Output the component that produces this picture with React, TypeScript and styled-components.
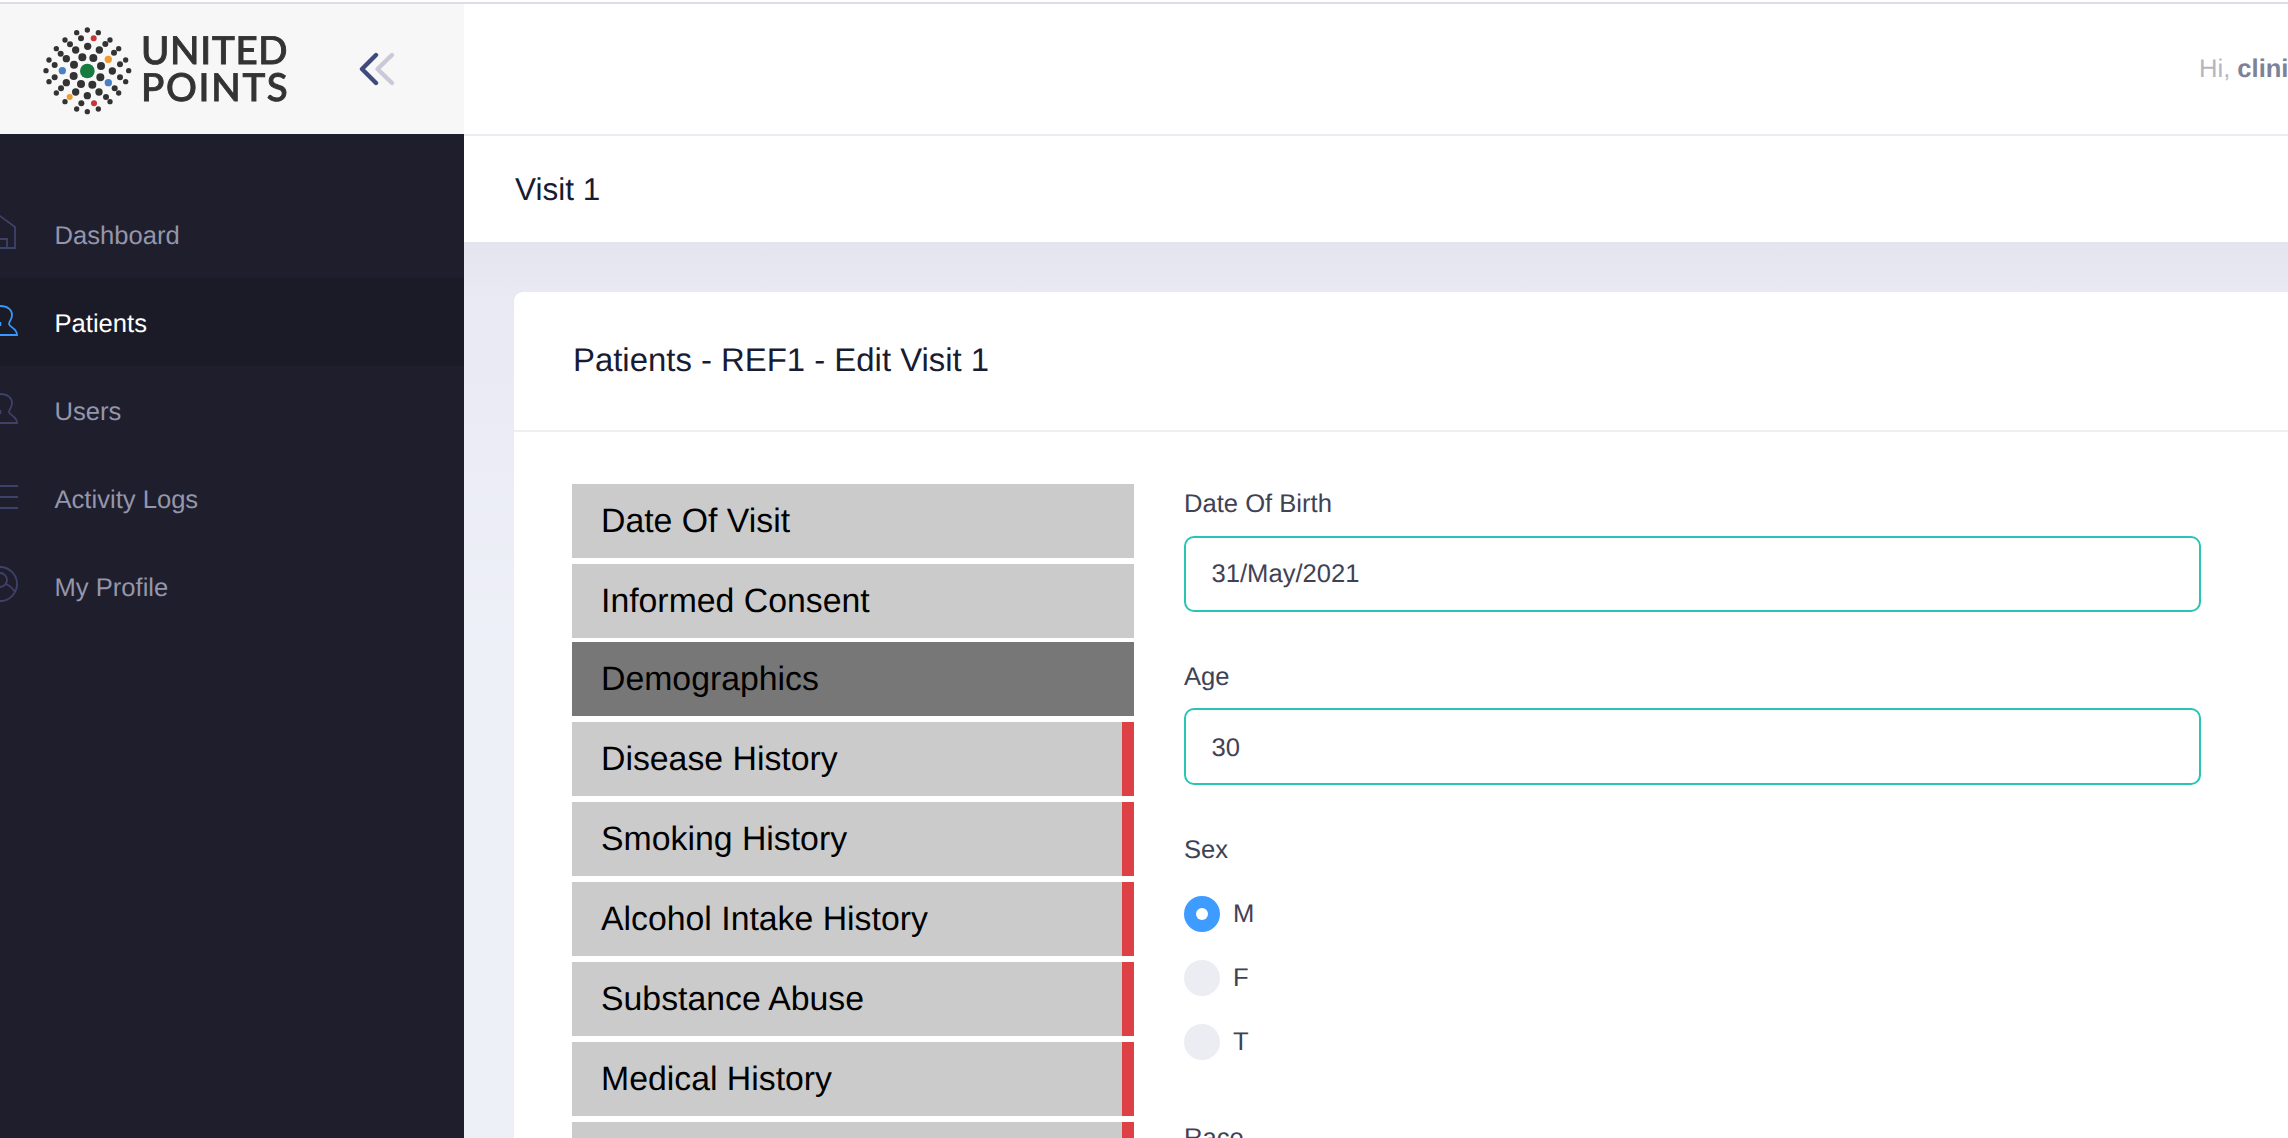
import React from "react";
import styled, { createGlobalStyle } from "styled-components";

const Global = createGlobalStyle`
  html, body { margin: 0; padding: 0; background: #fff; }
  * { box-sizing: border-box; }
`;

const Page = styled.div`
  width: 2288px;
  height: 1138px;
  overflow: hidden;
  background: #fff;
  font-family: "Liberation Sans", Arial, sans-serif;
  text-rendering: geometricPrecision;
  display: flex;
  flex-direction: column;
`;
const TopEdge = styled.div`
  height: 4px;
  flex: none;
  background: #fff;
  border-bottom: 2px solid #dedde6;
`;
const Shell = styled.div`
  flex: 1;
  min-height: 0;
  display: flex;
`;
const Aside = styled.aside`
  width: 464px;
  flex: none;
  display: flex;
  flex-direction: column;
`;
const Brand = styled.div`
  height: 130px;
  flex: none;
  background: #f7f7f7;
  display: flex;
  align-items: center;
  padding-left: 42px;
`;
const LogoSvg = styled.svg`
  flex: none;
  margin-left: -12px;
  filter: blur(0.5px);
`;
const Wordmark = styled.div`
  font-family: Lato, sans-serif;
  font-size: 38.5px;
  line-height: 37px;
  font-weight: 500;
  color: #333;
  margin-left: 1px;
  width: 163px;
  -webkit-text-stroke: 0.9px #333;
  filter: blur(0.4px);
`;
const WordLine = styled.div<{ $spacing: number }>`
  letter-spacing: ${(p) => p.$spacing}px;
`;
const Collapse = styled.svg`
  width: 40px;
  height: 40px;
  flex: none;
  margin-left: 55px;
`;
const Nav = styled.nav`
  flex: 1;
  background: #1e1e2d;
  padding-top: 56px;
  overflow: hidden;
`;
const NavItem = styled.div<{ $active?: boolean }>`
  height: 88px;
  display: flex;
  align-items: center;
  gap: 36.5px;
  padding-top: 4px;
  font-size: 25.6px;
  color: ${(p) => (p.$active ? "#ffffff" : "#9496ab")};
  background: ${(p) => (p.$active ? "#1b1b28" : "transparent")};
`;
const NavIcon = styled.svg<{ $active?: boolean }>`
  width: 36px;
  height: 40px;
  flex: none;
  margin-left: -18px;
  margin-top: -4px;
  fill: none;
  stroke: ${(p) => (p.$active ? "#3699ff" : "#3f4268")};
  stroke-width: 1.8;
`;
const Main = styled.main`
  flex: 1;
  min-width: 0;
  display: flex;
  flex-direction: column;
`;
const TopBar = styled.header`
  height: 132px;
  flex: none;
  background: #fff;
  border-bottom: 2px solid #ebedf3;
  display: flex;
  align-items: center;
  padding: 0 0 0 1735px;
  font-size: 25.6px;
  white-space: nowrap;
  overflow: hidden;
  color: #b5b5c3;
`;
const UserName = styled.b`
  color: #7e8299;
  margin-left: 7px;
`;
const SubHeader = styled.div`
  height: 106px;
  flex: none;
  background: #fff;
  display: flex;
  align-items: center;
  padding-left: 51px;
  font-size: 31.5px;
  color: #181c32;
`;
const Content = styled.div`
  flex: 1;
  min-height: 0;
  padding: 50px 0 0 50px;
  background: linear-gradient(#e4e4ef 0, #e8e9f3 50px, #eef0f8 400px);
`;
const Card = styled.section`
  width: 1850px;
  height: 900px;
  background: #fff;
  border-radius: 9px;
`;
const CardHead = styled.div`
  height: 140px;
  border-bottom: 2px solid #eeeef3;
  display: flex;
  align-items: center;
  padding: 0 0 2px 59px;
  font-size: 32.9px;
  color: #181c32;
`;
const CardBody = styled.div`
  display: flex;
  gap: 50px;
  padding: 52px 0 0 58px;
`;
const TabList = styled.div`
  width: 562px;
  flex: none;
  display: flex;
  flex-direction: column;
`;
const Tab = styled.div<{ $active?: boolean; $first?: boolean; $incomplete?: boolean }>`
  height: 74px;
  flex: none;
  margin-top: ${(p) => (p.$first ? "0" : p.$active ? "4px" : "6px")};
  padding-left: 29px;
  display: flex;
  align-items: center;
  font-size: 33.8px;
  color: #000;
  background: ${(p) => (p.$active ? "#777777" : "#cbcbcb")};
  border-right: ${(p) => (p.$incomplete ? "12px solid #dd4045" : "none")};
`;
const Form = styled.div`
  width: 1017px;
  flex: none;
  padding-top: 5px;
`;
const Label = styled.div<{ $gap?: number; $top?: number }>`
  font-size: 25.6px;
  line-height: 30px;
  color: #3f4254;
  margin-top: ${(p) => p.$top ?? 0}px;
  margin-bottom: ${(p) => p.$gap ?? 17}px;
`;
const Input = styled.div<{ $tall?: boolean }>`
  height: ${(p) => (p.$tall ? 77 : 76)}px;
  border: 2.5px solid #2ac4b5;
  border-radius: 10px;
  background: #fff;
  display: flex;
  align-items: center;
  padding: ${(p) => (p.$tall ? 3 : 0)}px 0 0 25.5px;
  font-size: 25.6px;
  color: #3f4254;
`;
const RadioRow = styled.div`
  display: flex;
  align-items: center;
  gap: 13px;
  height: 36px;
  margin-bottom: 28px;
  font-size: 25.6px;
  color: #3f4254;
`;
const RadioDot = styled.span<{ $on?: boolean }>`
  width: 36px;
  height: 36px;
  flex: none;
  border-radius: 50%;
  background: ${(p) => (p.$on ? "#3e9bff" : "#ebedf3")};
  display: flex;
  align-items: center;
  justify-content: center;
  &::after {
    content: "";
    display: ${(p) => (p.$on ? "block" : "none")};
    width: 12px;
    height: 12px;
    border-radius: 50%;
    background: #fff;
  }
`;

const D = "#333333";
const dots: [number, number, number, string][] = [
  [172, 162, 22, "#177a3e"],
  ...[[157,121],[190,123],[213,147],[211,181],[187,203],[153,201],[131,177],[132,143]].map(
    ([x, y]) => [x, y, 12, D] as [number, number, number, string]
  ),
  ...[[173,88,D],[208,99,D],[235,127,"#f29a2e"],[247,162,D],[235,197,"#4a7fc8"],[207,225,D],[172,236,D],[137,225,D],[109,197,D],[97,161,"#4a7fc8"],[109,125,D],[137,99,D]].map(
    ([x, y, c]) => [x, y, 11, c] as [number, number, number, string]
  ),
  ...[[153,64,D],[191,64,"#c8353a"],[226,81,D],[252,107,D],[270,142,D],[270,181,D],[254,214,D],[228,240,D],[192,259,"#c8353a"],[154,259,D],[119,240,"#f29a2e"],[93,214,D],[74,181,D],[74,144,D],[92,110,D],[120,82,D]].map(
    ([x, y, c]) => [x, y, 9, c] as [number, number, number, string]
  ),
  ...[[172,39],[205,47],[240,69],[266,95],[287,129],[296,161],[287,194],[266,228],[240,254],[205,276],[172,284],[140,276],[105,254],[79,228],[57,194],[48,161],[57,129],[79,95],[105,69],[140,47]].map(
    ([x, y]) => [x, y, 8, D] as [number, number, number, string]
  ),
];

const LogoMark = () => (
  <LogoSvg width="110" height="105" viewBox="0 0 330 315">
    {dots.map(([x, y, r, c], i) => (
      <circle key={i} cx={x} cy={y} r={r} fill={c} />
    ))}
  </LogoSvg>
);

const icons: Record<string, React.ReactNode> = {
  home: (
    <>
      <path d="M3 13 L18 2 L33 13 V34 H3 V13" />
      <path d="M11 34 V25 H25 V34" />
    </>
  ),
  person: (
    <>
      <path d="M18 4 C26 4 30 8 30 13 C30 18 27 19 27 22 C27 25 35 26 35 33 H1 C1 26 9 25 9 22 C9 19 6 18 6 13 C6 8 10 4 18 4Z" />
      <path d="M18 20 V24" strokeWidth="2.5" />
    </>
  ),
  list: (
    <>
      <path d="M0 8 H36" />
      <path d="M0 19 H36" />
      <path d="M0 30 H36" />
    </>
  ),
  profile: (
    <>
      <circle cx="18" cy="18" r="17" />
      <circle cx="18" cy="14" r="7" />
      <path d="M24 18 Q29 20 33 26" />
    </>
  ),
};

const navItems = [
  { label: "Dashboard", icon: "home" },
  { label: "Patients", icon: "person", active: true },
  { label: "Users", icon: "person" },
  { label: "Activity Logs", icon: "list" },
  { label: "My Profile", icon: "profile" },
];

const tabs = [
  { label: "Date Of Visit" },
  { label: "Informed Consent" },
  { label: "Demographics", active: true },
  { label: "Disease History", bad: true },
  { label: "Smoking History", bad: true },
  { label: "Alcohol Intake History", bad: true },
  { label: "Substance Abuse", bad: true },
  { label: "Medical History", bad: true },
  { label: "Medication", bad: true },
];

export default function App() {
  return (
    <Page>
      <Global />
      <TopEdge />
      <Shell>
        <Aside>
          <Brand>
            <LogoMark />
            <Wordmark>
              <WordLine $spacing={0.7}>UNITED</WordLine>
              <WordLine $spacing={1.7}>POINTS</WordLine>
            </Wordmark>
            <Collapse viewBox="0 0 40 40" fill="none" strokeLinecap="round" strokeLinejoin="round" strokeWidth="4.4">
              <path d="M33 6 L18.5 20 L33 34" stroke="#c9c9d8" />
              <path d="M17 6 L3 20 L17 34" stroke="#3f4b7e" />
            </Collapse>
          </Brand>
          <Nav>
            {navItems.map((n) => (
              <NavItem key={n.label} $active={n.active}>
                <NavIcon viewBox="0 0 36 40" $active={n.active}>
                  {icons[n.icon]}
                </NavIcon>
                {n.label}
              </NavItem>
            ))}
          </Nav>
        </Aside>
        <Main>
          <TopBar>
            Hi,<UserName>clinician</UserName>
          </TopBar>
          <SubHeader>Visit 1</SubHeader>
          <Content>
            <Card>
              <CardHead>Patients - REF1 - Edit Visit 1</CardHead>
              <CardBody>
                <TabList>
                  {tabs.map((t, i) => (
                    <Tab key={t.label} $first={i === 0} $active={t.active} $incomplete={t.bad}>
                      {t.label}
                    </Tab>
                  ))}
                </TabList>
                <Form>
                  <Label>Date Of Birth</Label>
                  <Input>31/May/2021</Input>
                  <Label $top={50} $gap={16}>Age</Label>
                  <Input $tall>30</Input>
                  <Label $top={50} $gap={31}>Sex</Label>
                  <RadioRow><RadioDot $on />M</RadioRow>
                  <RadioRow><RadioDot />F</RadioRow>
                  <RadioRow><RadioDot />T</RadioRow>
                  <Label $top={63}>Race</Label>
                </Form>
              </CardBody>
            </Card>
          </Content>
        </Main>
      </Shell>
    </Page>
  );
}
